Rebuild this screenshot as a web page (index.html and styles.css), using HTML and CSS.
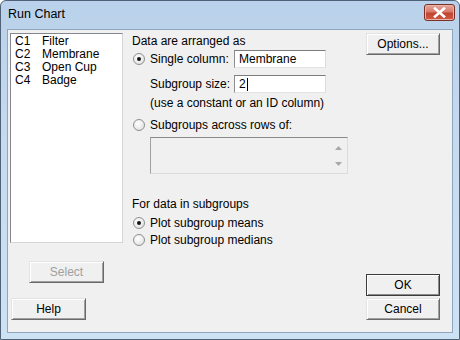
FILE: index.html
```html
<!DOCTYPE html>
<html lang="en">
<head>
  <meta charset="UTF-8">
  <title>Run Chart</title>
  <link rel="stylesheet" href="styles.css">
</head>
<body>
  <div class="window">
    <div class="titlebar">
      <span class="title">Run Chart</span>
      <span class="close">
        <svg width="13" height="11" viewBox="0 0 13 11">
          <path d="M2 1.5 L11 9.5 M11 1.5 L2 9.5" stroke="#ffffff" stroke-width="2.6" stroke-linecap="square" fill="none"/>
        </svg>
      </span>
    </div>

    <div class="client">
      <div class="col-left">
        <div class="listbox">
          <div class="item"><span class="cid">C1</span>Filter</div>
          <div class="item"><span class="cid">C2</span>Membrane</div>
          <div class="item"><span class="cid">C3</span>Open Cup</div>
          <div class="item"><span class="cid">C4</span>Badge</div>
        </div>
        <button class="btn select" disabled>Select</button>
        <button class="btn help">Help</button>
      </div>

      <div class="col-main">
        <div class="label first">Data are arranged as</div>
        <div class="row row-single">
          <span class="radio checked"></span>
          <span class="rlabel">Single column:</span>
          <span class="textbox">Membrane</span>
        </div>
        <div class="row row-size">
          <span class="rlabel">Subgroup size:</span>
          <span class="textbox">2<span class="caret"></span></span>
        </div>
        <div class="note">(use a constant or an ID column)</div>
        <div class="row row-across">
          <span class="radio"></span>
          <span class="rlabel">Subgroups across rows of:</span>
        </div>
        <div class="textarea">
          <div class="scroll">
            <svg width="7" height="4" viewBox="0 0 7 4"><path d="M0 4 L3.5 0 L7 4 Z" fill="#a7a7a7"/></svg>
            <svg width="7" height="4" viewBox="0 0 7 4"><path d="M0 0 L3.5 4 L7 0 Z" fill="#a7a7a7"/></svg>
          </div>
        </div>
        <div class="label group">For data in subgroups</div>
        <div class="row row-means">
          <span class="radio checked"></span>
          <span class="rlabel">Plot subgroup means</span>
        </div>
        <div class="row row-medians">
          <span class="radio"></span>
          <span class="rlabel">Plot subgroup medians</span>
        </div>
      </div>

      <div class="col-right">
        <button class="btn options">Options...</button>
        <div class="spacer"></div>
        <button class="btn ok">OK</button>
        <button class="btn cancel">Cancel</button>
      </div>
    </div>
  </div>
</body>
</html>
```

FILE: styles.css
```css
body {
  margin: 0;
  padding: 0;
  background-color: #ffffff;
  font-family: "Liberation Sans", Arial, sans-serif;
  font-size: 12px;
  color: #000000;
}

.window {
  width: 460px;
  height: 340px;
  box-sizing: border-box;
  border: 1px solid #4f6277;
  border-radius: 6px 6px 0 0;
  background: linear-gradient(#b9d1ea, #c6daef 40%, #cde2f3);
  padding: 0 6px 6px 6px;
  display: flex;
  flex-direction: column;
  overflow: hidden;
}

.titlebar {
  height: 28px;
  margin: 0 -6px;
  padding: 0 4px 0 7px;
  display: flex;
  align-items: flex-start;
}

.title {
  margin-top: 6px;
  font-size: 12.5px;
  color: #000000;
}

.close {
  margin-left: auto;
  margin-top: 3px;
  width: 31px;
  height: 17px;
  box-sizing: border-box;
  border: 1px solid #7a3027;
  border-radius: 3px;
  background: linear-gradient(#e8a89c, #d77a6a 45%, #c2442f 55%, #cd5b45);
  box-shadow: inset 0 0 0 1px #eab3a8;
  display: flex;
  align-items: center;
  justify-content: center;
}

.client {
  height: 304px;
  box-sizing: border-box;
  border: 1px solid #8fa6c0;
  background-color: #f0f0f0;
  display: flex;
}

/* left column */
.col-left {
  width: 124px;
  display: flex;
  flex-direction: column;
  align-items: flex-start;
}

.listbox {
  margin: 3px 0 0 2px;
  width: 113px;
  height: 210px;
  box-sizing: border-box;
  background-color: #ffffff;
  border: 1px solid #828790;
  border-right-color: #d5d5d5;
  border-bottom-color: #d5d5d5;
  padding: 1px 0 0 4px;
}

.item {
  height: 13px;
  line-height: 13px;
  white-space: nowrap;
}

.cid {
  display: inline-block;
  width: 27px;
}

/* buttons */
.btn {
  font-family: "Liberation Sans", Arial, sans-serif;
  font-size: 12px;
  color: #000000;
  width: 74px;
  height: 22px;
  padding: 0;
  background-color: #f0f0f0;
  border: 1px solid;
  border-color: #e3e3e3 #696969 #696969 #e3e3e3;
  box-shadow: inset 1px 1px #ffffff, inset -1px -1px #a0a0a0;
  border-radius: 0;
}

.btn:disabled {
  color: #a0a0a0;
}

.select {
  width: 75px;
  margin: 18px 0 0 21px;
}

.help {
  width: 75px;
  margin: 15px 0 0 3px;
}

/* middle column */
.col-main {
  width: 233px;
  display: flex;
  flex-direction: column;
  align-items: flex-start;
}

.label,
.note {
  line-height: 14px;
  height: 14px;
  white-space: nowrap;
}

.label.first {
  margin-top: 4px;
}

.row {
  display: flex;
  align-items: center;
  white-space: nowrap;
}

.row-single {
  margin-top: 2px;
  height: 18px;
}

.row-size {
  margin-top: 7px;
  height: 18px;
  padding-left: 18px;
}

.row-single .rlabel,
.row-size .rlabel {
  width: 84px;
}

.note {
  margin-top: 3px;
  padding-left: 18px;
}

.row-across {
  margin-top: 8px;
  height: 14px;
}

.radio {
  width: 12px;
  height: 12px;
  box-sizing: border-box;
  border: 1px solid #8e8f8f;
  border-radius: 50%;
  background: radial-gradient(circle at 40% 35%, #ffffff, #e6e6e6 70%, #d0d0d0);
  margin: 0 5px 0 1px;
  display: flex;
  align-items: center;
  justify-content: center;
}

.radio.checked::after {
  content: "";
  width: 4px;
  height: 4px;
  border-radius: 50%;
  background-color: #141414;
}

.textbox {
  width: 92px;
  height: 18px;
  box-sizing: border-box;
  background-color: #ffffff;
  border: 1px solid #abadb3;
  border-top-color: #7c7c7c;
  border-left-color: #8e8e8e;
  border-right-color: #dcdcdc;
  border-bottom-color: #e3e3e3;
  padding-left: 4px;
  line-height: 16px;
  display: flex;
  align-items: center;
}

.caret {
  width: 1px;
  height: 13px;
  margin-left: 1px;
  background-color: #000000;
}

.textarea {
  margin: 5px 0 0 18px;
  width: 198px;
  height: 37px;
  box-sizing: border-box;
  background-color: #f0f0f0;
  border: 1px solid #a0a0a0;
  border-top-color: #8a8a8a;
  border-right-color: #dcdcdc;
  border-bottom-color: #dcdcdc;
  display: flex;
  justify-content: flex-end;
}

.scroll {
  width: 17px;
  display: flex;
  flex-direction: column;
  align-items: center;
  justify-content: space-between;
  padding: 8px 0 7px 0;
  box-sizing: border-box;
}

.label.group {
  margin-top: 23px;
}

.row-means {
  margin-top: 5px;
  height: 14px;
}

.row-medians {
  margin-top: 3px;
  height: 14px;
}

/* right column */
.col-right {
  flex: 1;
  display: flex;
  flex-direction: column;
  align-items: flex-start;
  padding: 3px 0 12px 1px;
  box-sizing: border-box;
}

.spacer {
  flex: 1;
}

.ok {
  border-color: #3c3c3c;
  box-shadow: inset 1px 1px #ffffff, inset -1px -1px #8a8a8a;
}

.cancel {
  margin-top: 2px;
}
```
